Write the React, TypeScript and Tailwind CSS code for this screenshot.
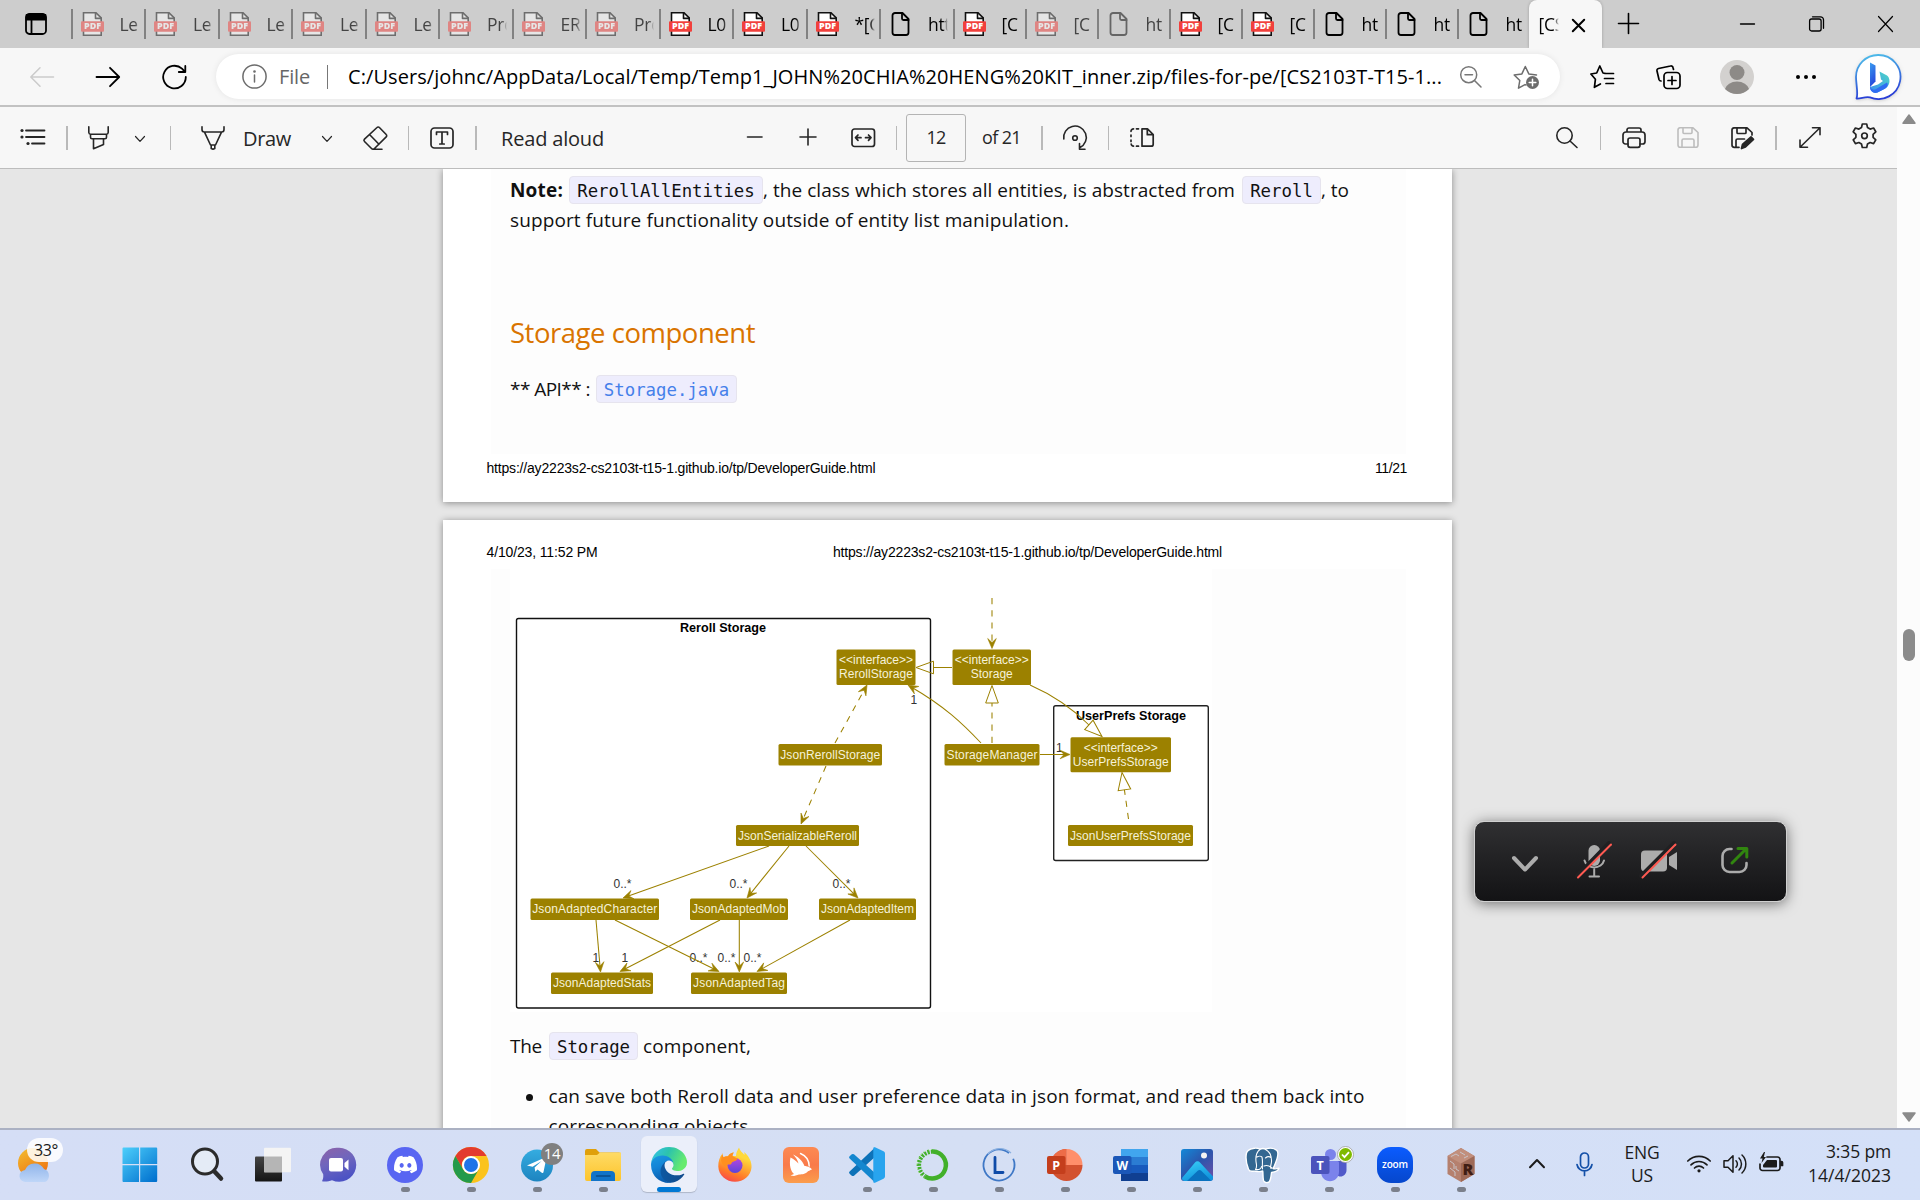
import React, { useLayoutEffect, useRef } from "react";
import { SiDiscord } from "react-icons/si";

/* Text that spreads or tightens its letters to fill a given width. */
function Fit({ w, className = "", children }: { w: number; className?: string; children: string }) {
  const ref = useRef<HTMLSpanElement>(null);
  useLayoutEffect(() => {
    const el = ref.current;
    if (!el) return;
    el.style.letterSpacing = "0px";
    const natural = el.getBoundingClientRect().width;
    el.style.letterSpacing = `${(w - natural) / children.length}px`;
  }, [w, children]);
  return (
    <span ref={ref} className={`inline-block shrink-0 whitespace-pre ${className}`}>
      {children}
    </span>
  );
}

type IconProps = { w: number; h: number; className?: string; sw?: number; children: React.ReactNode };
function Icon({ w, h, className = "", sw = 1.5, children }: IconProps) {
  return (
    <svg
      width={w}
      height={h}
      viewBox={`0 0 ${w} ${h}`}
      fill="none"
      stroke="currentColor"
      strokeWidth={sw}
      strokeLinecap="round"
      strokeLinejoin="round"
      className={`block shrink-0 overflow-visible ${className}`}
    >
      {children}
    </svg>
  );
}

/* ---------- Tab strip ---------- */

function PdfIcon() {
  return (
    <Icon w={23} h={24} sw={1.6}>
      <path d="M2.5 .8h12.5l5.2 5v17.4H2.5z" fill="#fff" stroke="#111" strokeLinejoin="miter" />
      <path d="M14.5 .8v5.6h5.7" stroke="#111" />
      <rect x="0" y="9.3" width="23" height="10.4" rx="1" fill="#f1403c" stroke="none" />
      <text x="3" y="17.4" fontSize="8" fontWeight="800" fill="#fff" stroke="none" textLength="17" lengthAdjust="spacingAndGlyphs" fontFamily="Open Sans, sans-serif">
        PDF
      </text>
    </Icon>
  );
}

function FileIcon() {
  return (
    <Icon w={23} h={24} sw={1.8} className="text-black">
      <path d="M6 1h7.500l6 6v13.5a2.5 2.5 0 0 1-2.5 2.500h-11A2.500 2.500 0 0 1 3.500 20.500V3.500A2.500 2.500 0 0 1 6 1z" />
      <path d="M13 1v5.500a1.500 1.500 0 0 0 1.500 1.500h5" />
    </Icon>
  );
}

const tabs: { t: string; kind: "pdf" | "file"; faded?: boolean }[] = [
  { t: "Le", kind: "pdf", faded: true },
  { t: "Le", kind: "pdf", faded: true },
  { t: "Le", kind: "pdf", faded: true },
  { t: "Le", kind: "pdf", faded: true },
  { t: "Le", kind: "pdf", faded: true },
  { t: "Pro", kind: "pdf", faded: true },
  { t: "ER", kind: "pdf", faded: true },
  { t: "Pro", kind: "pdf", faded: true },
  { t: "L0", kind: "pdf" },
  { t: "L0", kind: "pdf" },
  { t: "*[C", kind: "pdf" },
  { t: "htt", kind: "file" },
  { t: "[C", kind: "pdf" },
  { t: "[C", kind: "pdf", faded: true },
  { t: "ht", kind: "file", faded: true },
  { t: "[C", kind: "pdf" },
  { t: "[C", kind: "pdf" },
  { t: "ht", kind: "file" },
  { t: "ht", kind: "file" },
  { t: "ht", kind: "file" },
];

function TabStrip() {
  return (
    <div className="flex h-12 shrink-0 bg-[#cdcdcd] text-black">
      <div className="flex w-[70.5px] shrink-0 items-center pl-[25px]">
        <Icon w={22} h={22} sw={1.8}>
          <rect x="1" y="1" width="20" height="20" rx="3.500" />
          <path d="M1.500 2h19v4.500h-19z" fill="currentColor" />
          <path d="M6.500 6v15" />
        </Icon>
      </div>
      {tabs.map((tab, i) => (
        <div key={i} className={`flex shrink-0 items-center ${i < 12 ? "w-[73.5px]" : "w-[72px]"}`}>
          <div className="h-[30px] w-0.5 bg-[#828282]" />
          <div className={`ml-[8px] flex items-center ${tab.faded ? "opacity-50" : ""}`}>
            {tab.kind === "pdf" ? <PdfIcon /> : <FileIcon />}
          </div>
          <div
            className={`ml-[16px] w-[20px] overflow-hidden whitespace-nowrap text-[17.5px] leading-6 tracking-[-0.3px] [mask-image:linear-gradient(to_right,black_75%,transparent)] ${tab.faded ? "text-[#444]" : ""}`}
          >
            {tab.t}
          </div>
        </div>
      ))}
      <div className="flex w-[73px] shrink-0 items-center rounded-t-lg bg-[#f7f7f7] shadow-[0_0_3px_rgba(0,0,0,0.25)]">
        <div className="ml-[10px] w-[20px] overflow-hidden whitespace-nowrap text-[17.5px] leading-6 tracking-[-0.3px] [mask-image:linear-gradient(to_right,black_75%,transparent)]">
          [CS
        </div>
        <Icon w={13} h={13} sw={2} className="ml-[13px] mt-0.5">
          <path d="M.8.8l11.400 11.400M12.200.8L.8 12.200" />
        </Icon>
      </div>
      <Icon w={21} h={21} sw={1.600} className="ml-[16px] mt-[13px]">
        <path d="M10.500.5v20M.5 10.500h20" />
      </Icon>
      <Icon w={15} h={16} sw={1.300} className="ml-[101px] mt-4">
        <path d="M.5 8h14" />
      </Icon>
      <Icon w={15} h={16} sw={1.300} className="ml-[54px] mt-4">
        <rect x=".6" y="3" width="11.500" height="12" rx="2" />
        <path d="M3.500 .8h8a3 3 0 0 1 3 3v8.500" />
      </Icon>
      <Icon w={15} h={16} sw={1.200} className="ml-[54px] mt-4">
        <path d="M.5.500l14 15M14.500.5l-14 15" />
      </Icon>
    </div>
  );
}

/* ---------- Address bar ---------- */

function BingLogo() {
  return (
    <Icon w={46} h={46} className="drop-shadow">
      <defs>
        <linearGradient id="bingRing" x1="0" y1="0" x2="0.2" y2="1">
          <stop offset="0" stopColor="#4fc3ea" />
          <stop offset="1" stopColor="#2a3fd6" />
        </linearGradient>
        <linearGradient id="bingB" x1="0" y1="0" x2="0.3" y2="1">
          <stop offset="0" stopColor="#3a9df0" />
          <stop offset="1" stopColor="#2648dc" />
        </linearGradient>
        <linearGradient id="bingC" x1="1" y1="0" x2="0" y2="1">
          <stop offset="0" stopColor="#4ed7c6" />
          <stop offset="1" stopColor="#3a8cf0" />
        </linearGradient>
      </defs>
      <path d="M23 1a22 22 0 1 1-8 42.300C10 42 6 45 1.500 44.500 3.500 40 1 30 1 23A22 22 0 0 1 23 1z" fill="#fff" stroke="url(#bingRing)" strokeWidth="1.800" />
      <path d="M15 8.500l5.500 3v16L15 33z" fill="url(#bingB)" stroke="none" />
      <path d="M24.500 17.500l7.500 4c3 2 4 9-1 12.500l-8.500 4.500c-3 1-7.500-1-7.500-5.500l8-2.500 5-3.500-2-1.500z" fill="url(#bingC)" stroke="none" />
      <path d="M15 31c0 4 3.500 6 6.500 3.800L32 28.500c2 3-.5 5.500-2.500 6.500L22.500 38.500c-3.500 1.500-7.500-1-7.500-5.500z" fill="#2f6df2" stroke="none" />
    </Icon>
  );
}

function AddressBar() {
  return (
    <div className="flex h-[57px] shrink-0 items-center bg-[#f7f7f7] text-[#1a1a1a]">
      <Icon w={24} h={20} className="ml-[30px] text-[#cbcbcb]">
        <path d="M23.500 10H1M10 .8L.8 10l9.200 9.200" />
      </Icon>
      <Icon w={24} h={20} sw={1.800} className="ml-[42px] text-black">
        <path d="M.5 10H23M14 .8l9.200 9.200-9.200 9.200" />
      </Icon>
      <Icon w={25} h={24} sw={1.800} className="ml-[42px] text-black">
        <path d="M23.800 12A11.300 11.300 0 1 1 20 3.600l3 3.200M23.300 1v6h-6.500" />
      </Icon>
      <div className="ml-[29px] flex h-[45px] w-[1344px] shrink-0 items-center rounded-full bg-white shadow-[0_0_6px_rgba(0,0,0,0.08)]">
        <Icon w={25} h={25} className="ml-[26px] text-[#6c6c6c]">
          <circle cx="12.500" cy="12.500" r="11.600" />
          <path d="M12.500 11v7" />
          <circle cx="12.500" cy="7.500" r=".6" fill="currentColor" />
        </Icon>
        <Fit w={31} className="ml-[12px] text-[20px] leading-7 text-[#666]">File</Fit>
        <div className="ml-[17px] h-6 w-px bg-[#777]" />
        <Fit w={1094} className="ml-[20px] text-[20px] leading-7 text-black">
          C:/Users/johnc/AppData/Local/Temp/Temp1_JOHN%20CHIA%20HENG%20KIT_inner.zip/files-for-pe/[CS2103T-T15-1...
        </Fit>
        <Icon w={22} h={22} className="ml-[18px] text-[#777]">
          <circle cx="8.700" cy="8.700" r="8" />
          <path d="M5 8.700h7.500M14.500 14.500l6.500 6.500" />
        </Icon>
        <Icon w={26} h={26} className="ml-[31px] text-[#6c6c6c]">
          <path d="M13 21l-1-.4-6.500 3.600 1.300-7.700L1.200 11l7.700-1.100L12.300 2.500l3.500 7.400 7.700 1.100" />
          <circle cx="19.500" cy="18.500" r="6.500" fill="currentColor" stroke="none" />
          <path d="M19.500 15.200v6.600M16.200 18.500h6.600" stroke="#fff" />
        </Icon>
      </div>
      <Icon w={25} h={24} sw={1.700} className="ml-[30px] text-black">
        <path d="M15 8.300l-2-.3L9.800 1 6.700 8 .9 9l4.500 5.300-1 8 6-3.300M15 8.500h8.500M14.500 13.500h9M16 18.500h7.500" />
      </Icon>
      <Icon w={25} h={24} sw={1.700} className="ml-[41px] text-black">
        <rect x="8" y="7.500" width="16" height="16" rx="3.500" />
        <path d="M16 11.500v8M12 15.500h8M17.500 4.500l-.5-2A2 2 0 0 0 14.500 1L2.500 3.500A2 2 0 0 0 1 6l2 8.500c.3 1 1 1.500 2 1.500" />
      </Icon>
      <Icon w={34} h={34} className="ml-[39px]">
        <circle cx="17" cy="17" r="17" fill="#d3d1cf" stroke="none" />
        <circle cx="17" cy="12.500" r="7.500" fill="#8d8a87" stroke="none" />
        <path d="M5 29a12.200 9 0 0 1 24 0 17 17 0 0 1-24 0z" fill="#8d8a87" stroke="none" />
      </Icon>
      <Icon w={20} h={4} className="ml-[42px]">
        <g fill="#000" stroke="none">
          <circle cx="2" cy="2" r="2" />
          <circle cx="10" cy="2" r="2" />
          <circle cx="18" cy="2" r="2" />
        </g>
      </Icon>
      <div className="ml-[39px]">
        <BingLogo />
      </div>
    </div>
  );
}

/* ---------- PDF toolbar ---------- */

const Sep = ({ className }: { className: string }) => <div className={`h-6 shrink-0 bg-[#b9b9b9] ${className}`} />;
const ChevDown = ({ className }: { className: string }) => (
  <Icon w={10} h={6} sw={1.200} className={className}>
    <path d="M.5.500L5 5.300 9.500.5" />
  </Icon>
);

function PdfToolbar() {
  return (
    <div className="flex h-[62px] shrink-0 items-center border-b border-[#bdbdbd] bg-[#f7f7f7] text-[#262626]">
      <Icon w={25} h={18} sw={1.800} className="ml-5 mt-[-2px]">
        <path d="M6 2.500h18.500M6 9h18.500M12 15.500h12.500" />
        <g fill="currentColor" stroke="none">
          <circle cx="2" cy="2.500" r="1.600" />
          <circle cx="2" cy="9" r="1.600" />
          <circle cx="8" cy="15.500" r="1.600" />
        </g>
      </Icon>
      <Sep className="ml-[21px] w-0.5" />
      <Icon w={21} h={24} sw={1.600} className="ml-5">
        <path d="M.8 .8v5.700a1.800 1.800 0 0 0 1.800 1.700h15.800a1.800 1.800 0 0 0 1.800-1.700V.8M2.500 8.500v2.700c0 1 .5 1.600 1.500 1.600h13c1 0 1.500-.6 1.500-1.600V8.500M5.500 13v9.800l10-4.300V13" />
      </Icon>
      <ChevDown className="ml-[26px] mt-0.5" />
      <Sep className="ml-[25px] w-px" />
      <Icon w={24} h={24} sw={1.600} className="ml-[30px]">
        <path d="M1 .8v2.700c0 1.500.8 2.500 2.300 2.500h17.400c1.500 0 2.300-1 2.300-2.500V.8M3.500 6.200L9.500 19h5L20.500 6.200M10.200 19v3.500l1.800.8 1.800-.8V19" />
      </Icon>
      <Fit w={48} className="ml-[18px] mt-0.5 text-[20px] leading-7">Draw</Fit>
      <ChevDown className="ml-[31px] mt-0.5" />
      <Icon w={25} h={24} sw={1.600} className="ml-[31px]">
        <path d="M14 1.500a1.600 1.600 0 0 1 2.400 0l6.800 7a1.600 1.600 0 0 1 0 2.300L11.500 22.500a2 2 0 0 1-3 0L1.500 15.500a1.700 1.700 0 0 1 0-2.400zM6.500 8.500l9.500 9.800M10 23.200h9" />
      </Icon>
      <Sep className="ml-5 w-px" />
      <Icon w={24} h={22} sw={1.700} className="ml-[21px]">
        <rect x="1" y="1" width="22" height="20" rx="3.500" />
        <path d="M6.500 7.500V5h11v2.500M12 5v12M9.800 17h4.400" />
      </Icon>
      <Sep className="ml-[21px] w-0.5" />
      <Fit w={103} className="ml-[24px] mt-0.5 text-[20px] leading-7">Read aloud</Fit>
      <Icon w={15} h={18} sw={1.600} className="ml-[143px]">
        <path d="M.5 8h14.500" />
      </Icon>
      <Icon w={16} h={18} sw={1.600} className="ml-[38px]">
        <path d="M8 0v16M0 8h16" />
      </Icon>
      <Icon w={24} h={18} sw={1.700} className="ml-[35px]">
        <rect x="1" y="0" width="22.500" height="17.500" rx="2.500" />
        <path d="M10 8.700H5M7 6L4.500 8.700 7 11.400M14.500 8.700h5M17.500 6L20 8.700l-2.500 2.700" />
      </Icon>
      <Sep className="ml-[21px] w-px" />
      <div className="ml-[9px] flex h-12 w-[60px] shrink-0 items-center justify-center rounded-[3px] border border-[#b4b4b4]">
        <Fit w={19} className="text-[18px]">12</Fit>
      </div>
      <Fit w={39} className="ml-[16px] text-[18px]">of 21</Fit>
      <Sep className="ml-5 w-0.5" />
      <Icon w={24} h={24} sw={1.600} className="ml-5">
        <path d="M.8 13A11.300 11.300 0 1 1 17 21.500M22 23.200h-5.500M16.500 17.500v5.700" />
        <circle cx="12" cy="12" r="2.300" />
      </Icon>
      <Sep className="ml-[21px] w-px" />
      <Icon w={24} h={19} sw={1.700} className="ml-[21px]">
        <path d="M12 .8h5.500l5.700 5.700v9.700a2 2 0 0 1-2 2H12zM17.300 1v5.700h5.700" />
        <path d="M8.500 .8H6.500M3.500 .8A2.500 2.500 0 0 0 1 3.300M1 7v1.500M1 12v1.500M1.200 16a2.500 2.500 0 0 0 2.300 2.200M6.500 18.200h2" />
      </Icon>
      <Icon w={22} h={21} sw={1.600} className="ml-[402px]">
        <circle cx="8.500" cy="8.500" r="7.700" />
        <path d="M14 14l7 6.500" />
      </Icon>
      <Sep className="ml-[22px] w-px" />
      <Icon w={24} h={21} sw={1.700} className="ml-[21px]">
        <path d="M6 17H3.500a2.500 2.500 0 0 1-2.500-2.500V8a3 3 0 0 1 3-3h16a3 3 0 0 1 3 3v6.500a2.500 2.500 0 0 1-2.500 2.500H18M5 5V3a2 2 0 0 1 2-2h10a2 2 0 0 1 2 2v2" />
        <rect x="6" y="11" width="12" height="9.300" rx="2" />
      </Icon>
      <Icon w={22} h={21} sw={1.600} className="ml-[31px] text-[#bdbdbd]">
        <path d="M3 .8h13l5 4.700V18a2.300 2.300 0 0 1-2.300 2.300H3.300A2.300 2.300 0 0 1 1 18V3A2.200 2.200 0 0 1 3 .8zM6 1v4.500a1 1 0 0 0 1 1h7a1 1 0 0 0 1-1V1M5 20v-6.500a1.500 1.500 0 0 1 1.500-1.500h9a1.500 1.500 0 0 1 1.500 1.500V20" />
      </Icon>
      <Icon w={23} h={21} sw={1.700} className="ml-[32px]">
        <path d="M8 20.300H3.300A2.300 2.300 0 0 1 1 18V3A2.200 2.200 0 0 1 3 .8h13l5 4.700V8M6 1v4.500a1 1 0 0 0 1 1h7a1 1 0 0 0 1-1V1M5 20v-6.500a1.500 1.500 0 0 1 1.500-1.500h7" />
        <path d="M10.500 21.500l1-4L20 10l2.500 2.300-8 7.700z" fill="currentColor" />
      </Icon>
      <Sep className="ml-[21px] w-0.5" />
      <Icon w={22} h={21} sw={1.600} className="ml-[22px]">
        <path d="M1 20.200L21 .8M13.500.8H21v7M1 13v7.200h7.500" />
      </Icon>
      <Icon w={25} h={25} sw={1.700} className="ml-[31px] mt-[-4px]">
        <path d="M10.300 1h4.400l.8 3.600 2.600 1.500 3.500-1.100 2.200 3.800-2.700 2.500v3l2.700 2.500-2.200 3.800-3.500-1.100-2.600 1.500-.8 3.500h-4.400l-.8-3.500-2.600-1.500-3.500 1.100-2.200-3.800 2.700-2.500v-3L1.200 8.800 3.400 5l3.500 1.100 2.600-1.500z" />
        <circle cx="12.500" cy="12.800" r="2.800" />
      </Icon>
    </div>
  );
}

/* ---------- Class diagram ---------- */

const OLIVE = "#9c8100";

function Box({ x, y, x2, h, lines }: { x: number; y: number; x2: number; h: number; lines: [string, number, number][] }) {
  return (
    <g>
      <rect x={x} y={y} width={x2 - x} height={h} rx="1.500" fill={OLIVE} />
      {lines.map(([t, w, by]) => (
        <text key={t} x={(x + x2) / 2 - w / 2} y={by} fontSize="12" fill="#f6f2d8" textLength={w}>
          {t}
        </text>
      ))}
    </g>
  );
}

function Head({ x, y, fx, fy, tri }: { x: number; y: number; fx: number; fy: number; tri?: boolean }) {
  const a = (Math.atan2(y - fy, x - fx) * 180) / Math.PI;
  return (
    <g transform={`translate(${x} ${y}) rotate(${a})`}>
      {tri ? (
        <path d="M0 0L-17.500 -6.300V6.300z" fill="#fff" fillOpacity="0" stroke={OLIVE} strokeWidth="1" />
      ) : (
        <path d="M0 0L-10 -4.300L-6 0L-10 4.300z" fill={OLIVE} stroke={OLIVE} strokeWidth=".6" />
      )}
    </g>
  );
}

function Line({ p, dash, tri }: { p: [number, number, number, number]; dash?: boolean; tri?: boolean }) {
  const [x1, y1, x2, y2] = p;
  const d = Math.hypot(x2 - x1, y2 - y1);
  const k = (d - (tri ? 17.5 : 5)) / d;
  return (
    <g>
      <path d={`M${x1} ${y1}L${x1 + (x2 - x1) * k} ${y1 + (y2 - y1) * k}`} stroke={OLIVE} strokeWidth="1.050" strokeDasharray={dash ? "6.200 6" : undefined} />
      <Head x={x2} y={y2} fx={x1} fy={y1} tri={tri} />
    </g>
  );
}

const multiplicities: [string, number, number, number][] = [
  ["0..*", 613.5, 888.3, 18],
  ["0..*", 729.5, 888.3, 18],
  ["0..*", 832.5, 888.3, 18],
  ["1", 592.5, 962, 5],
  ["1", 621.5, 962, 5],
  ["0..*", 689.5, 962, 18],
  ["0..*", 717.5, 962, 18],
  ["0..*", 743.500, 962, 18],
  ["1", 910.5, 704, 5],
  ["1", 1056, 752, 5],
];

function Diagram() {
  return (
    <svg width="702" height="443" viewBox="510 569 702 443" fill="none" fontFamily="Liberation Sans, Arial, sans-serif" className="ml-[19px] block bg-white">
      <rect x="516.500" y="618.500" width="414" height="389.500" rx="2" stroke="#111" strokeWidth="1.400" />
      <rect x="1053.700" y="705.700" width="154.600" height="154.800" rx="2" stroke="#222" strokeWidth="1.400" />
      <g fontWeight="700" fontSize="12" fill="#000">
        <text x="680" y="632.300" textLength="86" lengthAdjust="spacingAndGlyphs">Reroll Storage</text>
        <text x="1076" y="719.800" textLength="110" lengthAdjust="spacingAndGlyphs">UserPrefs Storage</text>
      </g>
      {multiplicities.map(([t, x, y, w], i) => (
        <text key={i} x={x} y={y} fontSize="12" fill="#333" textLength={w > 6 ? w : undefined}>
          {t}
        </text>
      ))}
      <Line p={[992, 598, 992, 648.5]} dash />
      <Line p={[952, 667.5, 916, 667.5]} tri />
      <path d="M981 743C962 723 944 706 912 687.500" stroke={OLIVE} strokeWidth="1.050" />
      <Head x={908} y={685} fx={928} fy={697} />
      <Line p={[992, 743, 992, 685.5]} dash tri />
      <Line p={[1040, 754.5, 1070, 754.5]} />
      <path d="M1030 685C1055 696 1075 711 1089 725" stroke={OLIVE} strokeWidth="1.050" />
      <Head x={1102} y={736.5} fx={1089} fy={725} tri />
      <Line p={[1128.5, 819, 1122, 772.5]} dash tri />
      <Line p={[835, 743, 867, 685]} dash />
      <Line p={[826, 766, 801, 824]} dash />
      <Line p={[769, 846, 623, 898]} />
      <Line p={[789, 846, 747, 898]} />
      <Line p={[806, 846, 858, 898]} />
      <Line p={[596, 920, 600.5, 972]} />
      <Line p={[615, 920, 719, 971.5]} />
      <Line p={[720, 920, 620, 971.5]} />
      <Line p={[739.3, 920, 739.3, 972]} />
      <Line p={[850, 920, 757, 971.5]} />
      <Box x={836.5} y={649.5} x2={915.5} h={35.5} lines={[["<<interface>>", 74, 664.3], ["RerollStorage", 74, 678.3]]} />
      <Box x={952.5} y={649.5} x2={1031} h={35.5} lines={[["<<interface>>", 74, 664.3], ["Storage", 42, 678.3]]} />
      <Box x={778.5} y={744} x2={882} h={21.500} lines={[["JsonRerollStorage", 100, 759]]} />
      <Box x={944.5} y={744} x2={1039.500} h={21.500} lines={[["StorageManager", 91, 759]]} />
      <Box x={1070.500} y={737.300} x2={1171} h={35} lines={[["<<interface>>", 74, 752], ["UserPrefsStorage", 96, 765.7]]} />
      <Box x={1068} y={825} x2={1193} h={21} lines={[["JsonUserPrefsStorage", 121, 839.5]]} />
      <Box x={736} y={825} x2={859} h={21} lines={[["JsonSerializableReroll", 119, 839.5]]} />
      <Box x={530.500} y={898.500} x2={659} h={21.500} lines={[["JsonAdaptedCharacter", 125, 913.3]]} />
      <Box x={690} y={898.500} x2={788} h={21.500} lines={[["JsonAdaptedMob", 94, 913.3]]} />
      <Box x={819} y={898.500} x2={916} h={21.500} lines={[["JsonAdaptedItem", 93, 913.3]]} />
      <Box x={551} y={972.500} x2={653} h={21.500} lines={[["JsonAdaptedStats", 98, 987.3]]} />
      <Box x={691} y={972.500} x2={787} h={21.500} lines={[["JsonAdaptedTag", 92, 987.3]]} />
    </svg>
  );
}

/* ---------- Document ---------- */

const Code = ({ className, children }: { className: string; children: string }) => (
  <code
    className={`flex h-7 shrink-0 items-center justify-center rounded-[4px] border border-[#e6e4ee] bg-[#eeedfd] pt-px font-['DejaVu_Sans_Mono',monospace] text-[17.35px] ${className}`}
  >
    {children}
  </code>
);

function Document() {
  return (
    <div className="min-h-0 flex-1 overflow-hidden bg-[#e6e6e6] pl-[443px] text-[19px] text-[#111]">
      <section className="h-[333px] w-[1009px] bg-white shadow-[0_1px_7px_rgba(0,0,0,0.4)]">
        <div className="ml-12 flex h-[285px] w-[915px] flex-col bg-[#fdfdfd] pl-[19px] pt-1.5">
          <div className="flex h-[30px] items-center">
            <Fit w={53} className="font-bold">Note:</Fit>
            <Code className="ml-1.5 w-[194px]">RerollAllEntities</Code>
            <Fit w={472}>, the class which stores all entities, is abstracted from</Fit>
            <Code className="ml-[7px] w-[79px]">Reroll</Code>
            <Fit w={28}>, to</Fit>
          </div>
          <div className="flex h-[30px] items-center">
            <Fit w={559}>support future functionality outside of entity list manipulation.</Fit>
          </div>
          <h2 className="mt-[78px] flex h-10 items-center text-[27.5px] text-[#d97400]">
            <Fit w={245}>Storage component</Fit>
          </h2>
          <div className="mt-[21px] flex h-[30px] items-center">
            <Fit w={80}>** API** :</Fit>
            <Code className="ml-1.5 w-[141px] text-[#4580ea]">Storage.java</Code>
          </div>
        </div>
        <div className="ml-[43.500px] mr-[45px] mt-[-1px] flex h-[30px] items-center justify-between font-['Liberation_Sans',Arial,sans-serif] text-[14px] text-black">
          <Fit w={389}>https://ay2223s2-cs2103t-t15-1.github.io/tp/DeveloperGuide.html</Fit>
          <Fit w={32}>11/21</Fit>
        </div>
      </section>
      <section className="mt-[18px] h-[700px] w-[1009px] bg-white pt-[22px] shadow-[0_1px_7px_rgba(0,0,0,0.4)]">
        <div className="flex h-5 items-center pl-[43.5px] font-['Liberation_Sans',Arial,sans-serif] text-[14px] text-black">
          <Fit w={111}>4/10/23, 11:52 PM</Fit>
          <Fit w={389} className="ml-[235.5px]">https://ay2223s2-cs2103t-t15-1.github.io/tp/DeveloperGuide.html</Fit>
        </div>
        <div className="ml-12 mt-[7px] h-[651px] w-[915px] bg-[#fdfdfd]">
          <Diagram />
          <div className="mt-[19px] flex h-[30px] items-center pl-[19px]">
            <Fit w={32}>The</Fit>
            <Code className="ml-[7px] w-[89px]">Storage</Code>
            <Fit w={108} className="ml-[5px]">component,</Fit>
          </div>
          <div className="mt-5 flex pl-[34.5px]">
            <div className="mt-[13px] h-[7px] w-[7px] rounded-full bg-[#111]" />
            <div className="ml-[16px] flex flex-col items-start leading-[30px]">
              <Fit w={816}>can save both Reroll data and user preference data in json format, and read them back into</Fit>
              <Fit w={205}>corresponding objects.</Fit>
            </div>
          </div>
        </div>
      </section>
    </div>
  );
}

function Scrollbar() {
  return (
    <div className="flex w-[23px] shrink-0 flex-col items-center bg-[#fcfcfc] text-[#8b8b8b]">
      <Icon w={14} h={10} className="mt-[7px]">
        <path d="M7 1L13 9.200H1z" fill="currentColor" />
      </Icon>
      <div className="mt-[505px] h-8 w-3 rounded-full bg-[#8b8b8b]" />
      <div className="flex-1" />
      <Icon w={14} h={10} className="mb-[6px]">
        <path d="M7 9L1 1h12z" fill="currentColor" />
      </Icon>
    </div>
  );
}

/* ---------- Meeting controls ---------- */

function MeetingControls() {
  return (
    <div className="absolute left-[1473.500px] top-[821px] flex h-[81px] w-[313px] rounded-[10px] border-[1.5px] border-[#d0d0d0] bg-gradient-to-b from-[#303032] to-[#131315] text-[#acacac] shadow-[0_2px_14px_rgba(0,0,0,0.5)]">
      <Icon w={26} h={16} sw={4} className="ml-[37px] mt-[34px]">
        <path d="M2 2l11 11.500L24 2" />
      </Icon>
      <Icon w={34} h={34} sw={2} className="ml-[39px] mt-[22px]">
        <rect x="11.500" y="1" width="11.500" height="21" rx="5.700" fill="currentColor" stroke="none" />
        <path d="M7.500 16.500a10 9 0 0 0 19.500 0M17.200 25.500v7M12.500 32.500h9.500" />
        <path d="M0 32L32-1" stroke="#202022" strokeWidth="4" />
        <path d="M1 33.500L34 .5" stroke="#ff5a52" strokeWidth="2" />
      </Icon>
      <Icon w={36} h={34} sw={2} className="ml-[30px] mt-[22px]">
        <rect x="0" y="6.500" width="26" height="21" rx="4" fill="currentColor" stroke="none" />
        <path d="M28 13l8-5v18l-8-5z" fill="currentColor" stroke="none" />
        <path d="M0 32L33-1" stroke="#202022" strokeWidth="4" />
        <path d="M1.500 33.500L34.500 .5" stroke="#ff5a52" strokeWidth="2" />
      </Icon>
      <Icon w={27} h={27} sw={2.600} className="ml-[44px] mt-[25px]">
        <path d="M10.500 2H8.500A7 7 0 0 0 1.500 9v9a7 7 0 0 0 7 7h10a7 7 0 0 0 7-7v-2" />
        <path d="M11 16L25 2M17 1.500h8.800V10" stroke="#31860f" strokeWidth="3" />
      </Icon>
    </div>
  );
}

/* ---------- Taskbar ---------- */

const Svg = ({ s = 36, vb = "0 0 36 36", children }: { s?: number; vb?: string; children: React.ReactNode }) => (
  <svg width={s} height={s} viewBox={vb} className="block overflow-visible">
    {children}
  </svg>
);

const Lg = ({ id, a, b, c, x2 = 0, y2 = 1 }: { id: string; a: string; b: string; c?: string; x2?: number; y2?: number }) => (
  <linearGradient id={id} x1="0" y1="0" x2={x2} y2={y2}>
    <stop offset="0" stopColor={a} />
    {c && <stop offset=".5" stopColor={c} />}
    <stop offset="1" stopColor={b} />
  </linearGradient>
);

const WindowsLogo = () => (
  <div className="mr-[3px]">
    <Svg>
      <Lg id="win" a="#4dcffb" b="#0272cf" x2={0.9} />
      <path d="M1.500 .5H17V17H.5V1.500a1 1 0 0 1 1-1zM18.200 .5h16a1 1 0 0 1 1 1V17h-17zM.5 18.300H17V35H1.500a1 1 0 0 1-1-1zM18.200 18.300h17V34a1 1 0 0 1-1 1h-16z" fill="url(#win)" />
    </Svg>
  </div>
);
const SearchLogo = () => (
  <Svg>
    <circle cx="16" cy="14.500" r="12.500" fill="#e4ebf6" stroke="#2b2b2b" strokeWidth="3" />
    <path d="M25.500 24.500l6.500 7" stroke="#2b2b2b" strokeWidth="4.500" strokeLinecap="round" />
  </Svg>
);
const TaskView = () => (
  <Svg>
    <Lg id="tvd" a="#444" b="#151515" />
    <rect x="0" y="9.500" width="27" height="25" rx="1" fill="url(#tvd)" />
    <rect x="9" y=".8" width="27" height="24.500" rx="1" fill="#f4f4f4" />
    <rect x="9" y="9.500" width="18" height="15.800" fill="#b5b5b5" />
  </Svg>
);
const ChatLogo = () => (
  <Svg>
    <Lg id="chat" a="#8e62a8" b="#4d53c4" c="#6f66bd" x2={0.4} />
    <path d="M18 .8a17 17 0 1 1-7 32.400C8 34.500 4 35 1 34.300c1.200-2.500 1.500-4 1.200-7A17 17 0 0 1 18 .8z" fill="url(#chat)" />
    <rect x="8" y="11" width="14" height="13.500" rx="2" fill="#fff" />
    <path d="M23.500 16l4-3.500v10.800l-4-3.500z" fill="#fff" />
  </Svg>
);
const DiscordLogo = () => (
  <div className="flex h-9 w-9 items-center justify-center rounded-full bg-[#5865f2] text-white">
    <SiDiscord size={23} />
  </div>
);
const ChromeLogo = () => (
  <Svg>
    <circle cx="18" cy="18" r="18" fill="#fbc31c" />
    <path d="M2.400 9A18 18 0 0 1 33.600 9H18a9 9 0 0 0-8 13.500z" fill="#e33b2e" />
    <path d="M2.400 9A18 18 0 0 0 18 36l7.800-13.500a9 9 0 0 1-15.600 0z" fill="#249a4a" />
    <circle cx="18" cy="18" r="9" fill="#fff" />
    <circle cx="18" cy="18" r="7" fill="#1f74e8" />
  </Svg>
);
const TelegramLogo = () => (
  <div className="relative">
    <Svg>
      <Lg id="tg" a="#35ace0" b="#1d84c0" />
      <circle cx="18" cy="18.500" r="16" fill="url(#tg)" />
      <path d="M8 18.500L26 10.500c1-.4 1.500 0 1.300 1L24.500 25c-.2 1-.8 1.200-1.700.7l-4.300-3.200-2.200 2.200-.7-4.200 7-6.500-9 5.700z" fill="#fff" />
    </Svg>
    <div className="absolute -top-1 left-[22px] flex h-[22px] w-[22px] items-center justify-center rounded-full bg-[#808080] text-[15px] tracking-tight text-white">
      14
    </div>
  </div>
);
const ExplorerLogo = () => (
  <Svg>
    <Lg id="fold" a="#fedb66" b="#fdc42c" />
    <path d="M0 4a2 2 0 0 1 2-2h9l3.500 3.500H34a2 2 0 0 1 2 2V14H0z" fill="#e0a00a" />
    <path d="M0 8h12l3-2.500h21V32a2 2 0 0 1-2 2H2a2 2 0 0 1-2-2z" fill="url(#fold)" />
    <path d="M6 34v-6a4 4 0 0 1 4-4h16a4 4 0 0 1 4 4v6z" fill="#1173c8" />
    <path d="M11.500 29h13.500" stroke="#0a4b86" strokeWidth="1.500" strokeLinecap="round" />
  </Svg>
);
const EdgeLogo = () => (
  <Svg vb="0 0 256 256">
    <Lg id="eg1" a="#0c59a4" b="#114a8b" x2={1} y2={0} />
    <Lg id="eg2" a="#1b9de2" b="#0b5cad" c="#1383d6" x2={0.3} />
    <Lg id="eg3" a="#35c1f1" b="#66eb6e" c="#2cc3ac" x2={1} y2={0.35} />
    <g transform="translate(-4.630 -4.920)">
      <path fill="url(#eg1)" d="M235.680 195.460a93.730 93.730 0 0 1-10.540 4.710 101.870 101.870 0 0 1-35.900 6.460c-47.320 0-88.540-32.550-88.540-74.320A31.480 31.480 0 0 1 117.130 105c-42.800 1.800-53.800 46.400-53.800 72.530 0 73.880 68.090 81.370 82.760 81.370 7.910 0 19.840-2.300 27-4.560l1.310-.44a128.340 128.340 0 0 0 66.600-52.800 4 4 0 0 0-5.320-5.640z" />
      <path fill="url(#eg2)" d="M110.340 246.340A79.200 79.200 0 0 1 87.600 225a80.720 80.720 0 0 1 29.530-120c3.120-1.470 8.450-4.130 15.540-4a32.350 32.350 0 0 1 25.690 13 31.880 31.880 0 0 1 6.360 18.660c0-.21 24.460-79.600-80-79.600-43.900 0-80 41.660-80 78.210a130.150 130.150 0 0 0 12.110 56 128 128 0 0 0 156.380 67.110 75.550 75.550 0 0 1-62.780-8z" />
      <path fill="url(#eg3)" d="M156.940 153.460c-.81 1.050-3.300 2.500-3.300 5.660 0 2.610 1.700 5.120 4.720 7.230 14.380 10 41.490 8.680 41.560 8.680a59.560 59.560 0 0 0 30.270-8.350 61.380 61.380 0 0 0 30.430-52.880c.26-22.410-8-37.310-11.340-43.910C228.100 28.760 182.350 4.920 132.610 4.920a128 128 0 0 0-128 126.200c.48-36.540 36.800-66.050 80-66.050 3.500 0 23.460.34 42 10.070 16.340 8.580 24.900 18.940 30.850 29.210 6.180 10.670 7.280 24.150 7.280 29.520s-2.740 13.330-7.800 19.590z" />
    </g>
  </Svg>
);
const FirefoxLogo = () => (
  <Svg>
    <Lg id="ff" a="#ffd93a" b="#f0156f" c="#ff7a28" x2={-0.4} />
    <Lg id="ffp" a="#b847e0" b="#5a45d8" />
    <path d="M22 .5c1 3.500 3 4.500 5.500 7.500 0-1 0-2-.3-3 5 4.500 7.800 10 7.300 15.500C33.800 29 26.500 34.800 18 34.800S1.500 28.500 1.300 19.500c-.1-5 1.200-9.500 4.200-13 0 1.500.5 3 1 3.800C8 9.200 9.500 9 11 9.200c1.500-2.500 3.500-3.500 6-3.700-1 1-1.500 2.500-1.500 3.500h3.500C19 5.500 20.500 3 22 .5z" fill="url(#ff)" />
    <circle cx="18" cy="18.500" r="7.500" fill="url(#ffp)" />
    <path d="M5.500 6.500c0 1.500.5 3 1 3.800C8 9.200 9.500 9 11 9.200c1.500-2.500 3.500-3.500 6-3.700-1 1-1.500 2.500-1.500 3.500l5 2.500c0 2-3 2.500-5 3.500-1.500.8-.5 3-3.500 2.500-2-.3-3 0-2 3-3-1-5-3-6-7 .3-2.500.5-5 2-7z" fill="#ff8f1f" />
  </Svg>
);
const SwiftLogo = () => (
  <Svg>
    <Lg id="sw" a="#fd8a52" b="#fb9d4c" c="#f97a4a" />
    <rect width="36" height="36" rx="6" fill="url(#sw)" />
    <path d="M7.500 10.500c3.500 1.500 5.500 3.500 8 6-1-3.500-2.500-6-5.500-9 4 1.500 9.500 6 11.500 11.500 2 .3 5.500.5 7.500 3.500-1.500 0-2 1.200-4 1.700-2.500 3-6 3-9 3.300l-5 1.500-3.500-.5 3.500-1.500C7.500 24 6 17.500 7.500 10.500z" fill="#fff" />
    <path d="M17.500 6.500c6 2.500 8.500 7 8.700 12.500" stroke="#fff" strokeWidth="1.400" fill="none" strokeLinecap="round" />
  </Svg>
);
const CodeLogo = () => (
  <Svg>
    <path d="M.6 24.600L26 .5V10L5 28.700a1.800 1.800 0 0 1-2.200 0L.6 26.800a1.500 1.500 0 0 1 0-2.200z" fill="#0d72b8" />
    <path d="M.6 11.400L26 35.500V26L5 7.300a1.800 1.800 0 0 0-2.200 0L.6 9.200a1.500 1.500 0 0 0 0 2.200z" fill="#1487cf" />
    <path d="M26 .3l8.500 4A2.500 2.500 0 0 1 36 6.500v23a2.500 2.500 0 0 1-1.500 2.200l-8.500 4c-1 .4-1.700 0-1.700-1V1.300c0-1 .7-1.400 1.700-1z" fill="#28a4ee" />
  </Svg>
);
const AnacondaLogo = () => (
  <Svg>
    <path d="M18 4.500A13.500 13.500 0 1 1 10 29.300" stroke="#42b02a" strokeWidth="4.500" fill="none" />
    <path d="M18 4.500A13.500 13.500 0 0 0 10 29.300" stroke="#42b02a" strokeWidth="4.500" strokeDasharray="2.200 1.200" fill="none" />
    <path d="M16.500 2.500A15.500 15.500 0 0 0 9 31" stroke="#eaf6ea" strokeWidth=".8" strokeDasharray="3 2" fill="none" />
  </Svg>
);
const LLogo = () => (
  <Svg>
    <circle cx="18" cy="18" r="15.500" stroke="#3f78c6" strokeWidth="1.800" fill="none" strokeDasharray="78 7" transform="rotate(20 18 18)" />
    <path d="M7 7A16 16 0 0 1 30 6" stroke="#8bb0e0" strokeWidth="1.200" fill="none" />
    <path d="M14 10.500V25.500h8" stroke="#0f4ba8" strokeWidth="2.800" fill="none" strokeLinecap="round" />
  </Svg>
);
const letter = { fontFamily: "Open Sans, sans-serif", fontWeight: 700, fill: "#fff", textAnchor: "middle" as const };
const PptLogo = () => (
  <Svg>
    <path d="M19.500 2a16 16 0 1 0 16 16h-16z" fill="#d35230" />
    <path d="M19.500 2a16 16 0 0 1 16 16h-16z" fill="#ff8f6b" />
    <path d="M19.500 2v16h-16a16 16 0 0 1 16-16z" fill="#ed6c47" />
    <rect x="0" y="9" width="18.500" height="18" rx="2" fill="#c43e1c" />
    <text x="9.200" y="22.500" fontSize="12.500" {...letter}>P</text>
  </Svg>
);
const WordLogo = () => (
  <Svg>
    <path d="M8 2h27v8H8z" fill="#41a5ee" />
    <path d="M8 10h27v8H8z" fill="#2b7cd3" />
    <path d="M8 18h27v8H8z" fill="#185abd" />
    <path d="M8 26h27v8H8z" fill="#103f91" />
    <rect x="0" y="9" width="18.500" height="18" rx="2" fill="#1b57b8" />
    <text x="9.200" y="22.500" fontSize="12" {...letter}>W</text>
  </Svg>
);
const PhotosLogo = () => (
  <Svg>
    <Lg id="ph" a="#1389d8" b="#6a4fa8" c="#2b55ac" x2={0.9} />
    <Lg id="ph2" a="#3ad1f8" b="#1194dd" x2={0.5} />
    <rect x="2" y="2" width="32" height="32" rx="3" fill="url(#ph)" />
    <path d="M3 31l13-15.500a3.200 3.200 0 0 1 5 0L34 29.500V31a3 3 0 0 1-3 3H5a3 3 0 0 1-2-3z" fill="url(#ph2)" />
    <path d="M8 34l11-10.500a2.500 2.500 0 0 1 3 0L32 33.500 31 34z" fill="#0a72bf" />
    <circle cx="25" cy="8.500" r="3" fill="#f2f2f2" />
  </Svg>
);
const PostgresLogo = () => (
  <Svg>
    <path
      d="M8 1.500c2.500-.8 5-.3 7 .7 1.500-.6 4-.8 5.500 0C24 .8 28.500.5 32 3.500c2 2.500.3 8-1.500 12.500-.7 2-1.500 4-2.500 5.500 1.500.5 4 .3 6-.3-.5 2-3.500 4-7.500 4.300-.5 3.500-.5 7.500-2.500 9.500-2 1-4.500 1-5.500-1.500-.8-3-.3-7-.8-9.500-2 .7-5 .7-7.200.2-3-.5-5.500 1.500-7-2C1.500 17 .5 10 1.500 6 2.500 3 5 2 8 1.500z"
      fill="#336791"
      stroke="#fff"
      strokeWidth="1.400"
      strokeLinejoin="round"
    />
    <path d="M15 2.500c-3.500 2.500-4.500 7-4 12 .3 3 1.500 5-.5 8M12 10c1.500-1 4-1 5 .2 1 3.800 0 7 .5 11.800M20.500 2.500c4 2 6.300 6 6 12-.2 3-1.500 4.500-.5 7M20.500 11c1.500-1.300 4-1.500 5.500-.5M10.500 22.500c3 .5 5.500-.5 6-3M19 19c2-1 5-.5 8 2" stroke="#fff" strokeWidth="1.100" fill="none" strokeLinecap="round" />
  </Svg>
);
const TeamsLogo = () => (
  <Svg>
    <circle cx="19.500" cy="7.500" r="5.500" fill="#7b83eb" />
    <path d="M25 14h9a1.500 1.500 0 0 1 1.500 1.500V23c0 4-3 6.500-6 6.500S24 27 24 27z" fill="#5059c9" />
    <path d="M10 14h16.500a1.500 1.500 0 0 1 1.500 1.500V25c0 5-4 9.300-9 9.300S10 30 10 25z" fill="#7b83eb" />
    <rect x="0" y="9" width="18.500" height="18" rx="2" fill="#4b53bc" />
    <text x="9.200" y="22.500" fontSize="12.500" {...letter}>T</text>
    <circle cx="34.500" cy="7.500" r="8" fill="#fff" stroke="#9a9a9a" strokeWidth=".8" />
    <circle cx="34.500" cy="7.500" r="6.500" fill="#7fba00" />
    <path d="M31 7.500l2.500 2.700 4.500-5" stroke="#fff" strokeWidth="1.800" fill="none" />
  </Svg>
);
const ZoomLogo = () => (
  <div className="flex h-9 w-9 items-center justify-center rounded-[14px] bg-gradient-to-b from-[#0b5cff] to-[#0647cc] pb-0.5">
    <Fit w={26} className="text-[10px] font-semibold leading-none text-white">zoom</Fit>
  </div>
);
const RLogo = () => (
  <Svg>
    <path d="M18 1l13.500 8v18L18 35 4.500 27V9z" fill="#b5806e" />
    <path d="M18 1l13.500 8L18 16.500 4.500 9z" fill="#c18f7d" />
    <path d="M18 16.500L31.500 9v18L18 35z" fill="#9e6a58" />
    <path d="M8 9.500l5-2.500 3 2M17 5l5 3M21 11l4-2M7 14l4 3v5M7 21l5 4v4M13 19v3l3 2" stroke="#c9c4c8" strokeWidth="1" fill="none" />
    <text x="25" y="28" fontSize="16" {...letter} fontWeight={800} fill="#3f1d14">R</text>
  </Svg>
);

const apps: { icon: React.ReactNode; run?: boolean; active?: boolean }[] = [
  { icon: <WindowsLogo /> },
  { icon: <SearchLogo /> },
  { icon: <TaskView /> },
  { icon: <ChatLogo /> },
  { icon: <DiscordLogo />, run: true },
  { icon: <ChromeLogo />, run: true },
  { icon: <TelegramLogo />, run: true },
  { icon: <ExplorerLogo />, run: true },
  { icon: <EdgeLogo />, active: true },
  { icon: <FirefoxLogo /> },
  { icon: <SwiftLogo /> },
  { icon: <CodeLogo />, run: true },
  { icon: <AnacondaLogo />, run: true },
  { icon: <LLogo />, run: true },
  { icon: <PptLogo />, run: true },
  { icon: <WordLogo />, run: true },
  { icon: <PhotosLogo />, run: true },
  { icon: <PostgresLogo />, run: true },
  { icon: <TeamsLogo />, run: true },
  { icon: <ZoomLogo />, run: true },
  { icon: <RLogo />, run: true },
];

function Taskbar() {
  return (
    <div className="flex h-[72px] shrink-0 border-t-2 border-[#abb1c3] bg-gradient-to-r from-[#d5def6] via-[#d5dff4] to-[#d4e0f8] text-[#1b1b1b]">
      <div className="relative h-full w-[108px] shrink-0 pl-[18px] pt-[18px]">
        <svg width="34" height="36" viewBox="0 0 34 36" className="block">
          <Lg id="sun" a="#f3c030" b="#ee7412" x2={0.6} />
          <Lg id="cloud" a="#8fb4ea" b="#bfd6f8" />
          <circle cx="15" cy="15" r="15" fill="url(#sun)" />
          <path d="M8 34a6 6 0 0 1-1-12 10.500 10.500 0 0 1 19-1 7 7 0 0 1 1 13z" fill="url(#cloud)" />
        </svg>
        <div className="absolute left-[27px] top-2 flex h-6 w-9 items-center justify-center rounded-full bg-white/85 pl-0.5">
          <Fit w={24} className="text-[16px] leading-none">33°</Fit>
        </div>
      </div>
      {apps.map((app, i) => (
        <div key={i} className="flex w-[66px] shrink-0 flex-col items-center">
          <div
            className={`mt-[6px] flex h-14 w-14 flex-col items-center rounded-md pt-[10px] ${app.active ? "bg-[#ebeffa] shadow-[0_1px_1px_rgba(0,0,0,0.18)]" : ""}`}
          >
            <div className="flex h-[38px] items-center justify-center">{app.icon}</div>
            {app.run && <div className="mt-[4px] h-[5px] w-[9px] rounded-full bg-[#7b808c]" />}
            {app.active && <div className="mt-[4px] h-[5px] w-6 rounded-full bg-[#0078d4]" />}
          </div>
        </div>
      ))}
      <Icon w={16} h={9} sw={2} className="ml-[35px] mt-[29px]">
        <path d="M1 8.300L8 1l7 7.300" />
      </Icon>
      <Icon w={17} h={25} sw={1.700} className="ml-[31px] mt-[22px] text-[#1450a8]">
        <rect x="4.500" y="1" width="8" height="15" rx="4" />
        <path d="M1 12.500a7.600 7.600 0 0 0 15 0M8.500 19.500v4" />
      </Icon>
      <div className="ml-[31px] flex w-9 flex-col items-center pt-[11px] text-[17.5px] leading-[23px]">
        <Fit w={35}>ENG</Fit>
        <Fit w={22}>US</Fit>
      </div>
      <Icon w={24} h={18} sw={1.700} className="ml-[27px] mt-[25px]">
        <path d="M.8 6a16 16 0 0 1 22.400 0M4 9.800a11.400 11.400 0 0 1 16 0M7.500 13a6.500 6.500 0 0 1 9 0" />
        <circle cx="12" cy="15.800" r="1.600" fill="currentColor" stroke="none" />
      </Icon>
      <Icon w={24} h={20} sw={1.500} className="ml-[12px] mt-6">
        <path d="M1 6.800h4l5-5v16.500l-5-5H1zM13 6.800a4.500 4.500 0 0 1 0 6.500M16 4a8.500 8.500 0 0 1 0 12M19 1a12.500 12.500 0 0 1 0 18" />
      </Icon>
      <Icon w={24} h={20} sw={1.700} className="ml-[12px] mt-[22px]">
        <path d="M8 5h10.500a2.500 2.500 0 0 1 2.500 2.500V16a2.500 2.500 0 0 1-2.500 2.500h-15A2.500 2.500 0 0 1 1 16v-4" />
        <path d="M8 8h9a1 1 0 0 1 1 1v5.500a1 1 0 0 1-1 1H5a1 1 0 0 1-1-1V13z" fill="currentColor" stroke="none" />
        <path d="M22 9.500h.5a1 1 0 0 1 1 1v3h-1.500z" fill="currentColor" />
        <path d="M5 0L1 6.500h2.500L2.500 11 7 5H4.800L6 0z" fill="currentColor" stroke="none" />
      </Icon>
      <div className="ml-[25px] flex w-[83px] flex-col items-end pt-[9px] text-[17.5px] leading-[24px]">
        <Fit w={65}>3:35 pm</Fit>
        <Fit w={83}>14/4/2023</Fit>
      </div>
    </div>
  );
}

export default function App() {
  return (
    <div className="relative flex h-[1200px] w-[1920px] flex-col overflow-hidden bg-[#e6e6e6] font-['Open_Sans','Noto_Sans',sans-serif]">
      <TabStrip />
      <AddressBar />
      <div className="h-0.5 shrink-0 bg-[#c2c2c2]" />
      <div className="flex min-h-0 flex-1">
        <div className="flex min-w-0 flex-1 flex-col">
          <PdfToolbar />
          <Document />
        </div>
        <Scrollbar />
      </div>
      <Taskbar />
      <MeetingControls />
    </div>
  );
}
